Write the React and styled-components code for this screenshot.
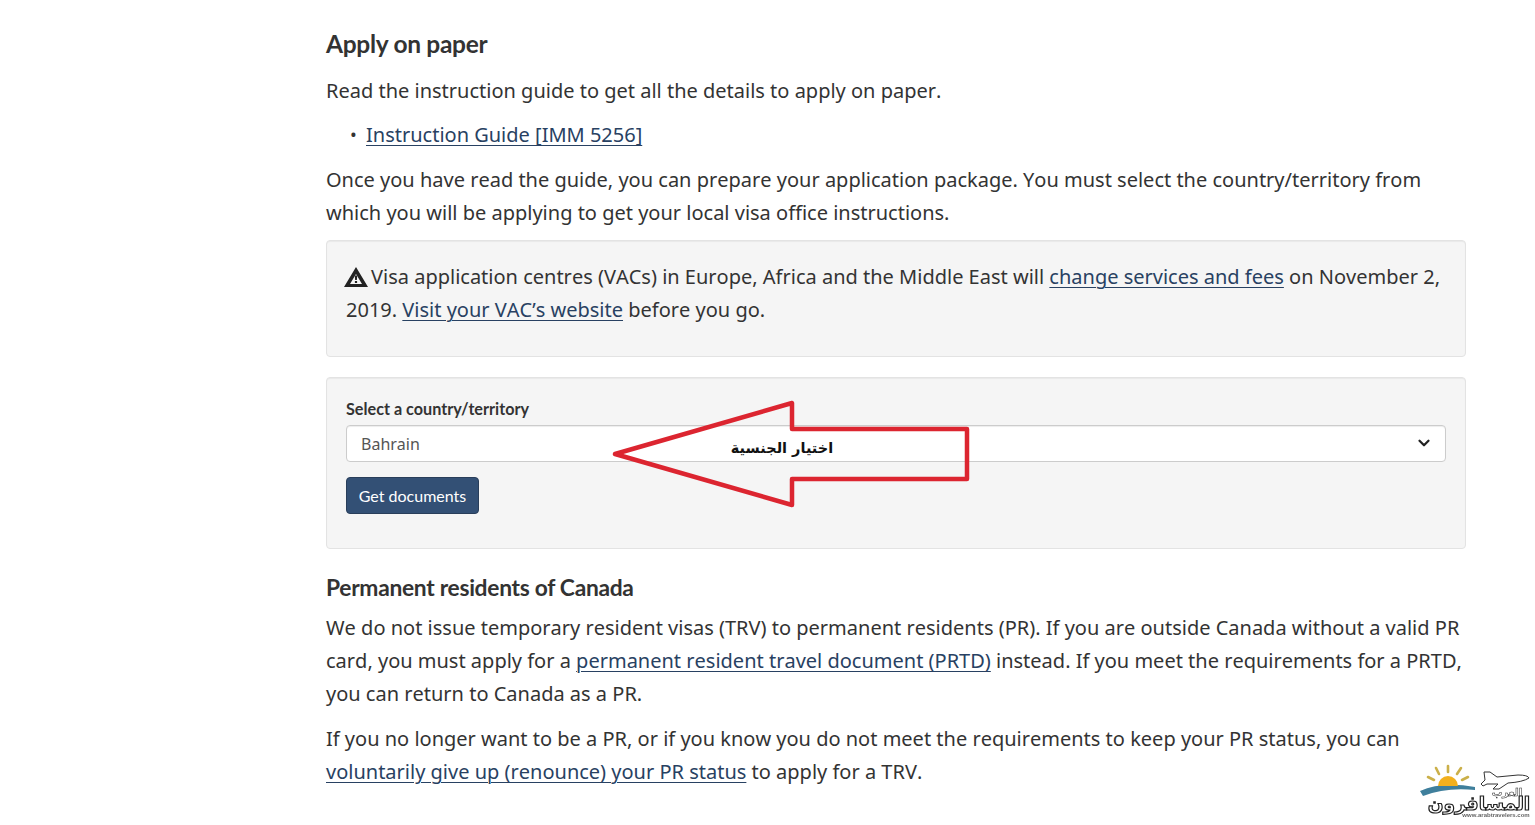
import React from 'react';
import styled, { createGlobalStyle } from 'styled-components';
import { ChevronDown } from 'lucide-react';

const GlobalStyle = createGlobalStyle`
  html, body {
    margin: 0;
    padding: 0;
    background: #fff;
  }
  body {
    font-family: "Noto Sans", sans-serif;
    font-size: 20px;
    font-kerning: none;
    line-height: 33px;
    color: #333;
    overflow: hidden;
  }
`;

const PageContainer = styled.div`
  position: relative;
  height: 825px;
  overflow: hidden;
`;

const Content = styled.main`
  width: 1140px;
  margin-left: 326px;
  padding-top: 27px;
`;

const Heading = styled.h2`
  font-family: Lato, sans-serif;
  font-kerning: normal;
  font-weight: 700;
  font-size: 24.5px;
  line-height: 34px;
  letter-spacing: -0.3px;
  margin: 0 0 13px;
`;

const SubHeading = styled(Heading).attrs({ as: 'h3' })`
  font-size: 22.8px;
  line-height: 32px;
  margin: 0 0 8px;
`;

const Paragraph = styled.p`
  margin: 0 0 ${props => props.$gap || 11}px;
`;

const List = styled.ul`
  margin: 0 0 12px;
  padding: 0 0 0 40px;
  list-style: none;
`;

const ListItem = styled.li`
  position: relative;

  &::before {
    content: '•';
    position: absolute;
    left: -16px;
    font-size: 18px;
  }
`;

const TextLink = styled.a`
  color: #284162;
  text-decoration: underline;
  text-decoration-thickness: 1px;
  text-underline-offset: 3px;
`;

const Panel = styled.section`
  position: relative;
  box-sizing: border-box;
  height: ${props => props.$height}px;
  margin-bottom: ${props => props.$gap}px;
  padding: ${props => props.$top}px 19px 0;
  background: #f5f5f5;
  border: 1px solid #e3e3e3;
  border-radius: 4px;
  box-shadow: inset 0 1px 1px rgba(0, 0, 0, 0.05);
`;

const WarningIcon = styled.svg`
  width: 24px;
  height: 20px;
  margin: 0 3px 0 -2px;
  vertical-align: -3px;
`;

const FieldLabel = styled.label`
  display: block;
  font-family: Lato, sans-serif;
  font-kerning: normal;
  font-weight: 700;
  font-size: 16.2px;
  line-height: 22px;
  margin-bottom: 5px;
`;

const SelectBox = styled.div`
  box-sizing: border-box;
  display: flex;
  align-items: center;
  justify-content: space-between;
  height: 37px;
  padding: 1px 12px 0 14px;
  background: #fff;
  border: 1px solid #ccc;
  border-radius: 4px;
  color: #555;
  font-size: 16px;
  box-shadow: inset 0 1px 1px rgba(0, 0, 0, 0.075);
`;

const SelectChevron = styled(ChevronDown)`
  margin-top: -3px;
`;

const SubmitButton = styled.button`
  display: block;
  box-sizing: border-box;
  width: 133px;
  height: 37px;
  margin-top: 15px;
  padding: 0;
  background: #335075;
  border: 1px solid #293e5a;
  border-radius: 4px;
  color: #fff;
  font-family: Lato, sans-serif;
  font-kerning: normal;
  font-size: 16px;
`;

const ArrowMark = styled.svg`
  position: absolute;
  left: 284px;
  top: 21px;
  width: 362px;
  height: 112px;
`;

const ArrowLabel = styled.span`
  position: absolute;
  left: 402px;
  top: 56px;
  width: 106px;
  text-align: center;
  direction: rtl;
  font-family: "DejaVu Sans", sans-serif;
  font-kerning: normal;
  font-weight: 700;
  font-size: 14.5px;
  line-height: 28px;
  color: #111;
`;

const Watermark = styled.svg`
  position: absolute;
  right: 3px;
  bottom: 3px;
  width: 112px;
  height: 58px;
  filter: blur(0.35px);
`;

const App = () => {
  return (
    <PageContainer>
      <GlobalStyle />
      <Content>
        <Heading>Apply on paper</Heading>
        <Paragraph>Read the instruction guide to get all the details to apply on paper.</Paragraph>
        <List>
          <ListItem><TextLink href="#">Instruction Guide [IMM 5256]</TextLink></ListItem>
        </List>
        <Paragraph $gap={11}>
          Once you have read the guide, you can prepare your application package. You must select the country/territory from which you will be applying to get your local visa office instructions.
        </Paragraph>

        <Panel $height={117} $gap={20} $top={19}>
          <WarningIcon viewBox="0 0 24 20">
            <path fillRule="evenodd" fill="#222" d="M12 0 L24 20 H0 Z M12 7 L6 17 H18 Z" />
            <path fill="#222" d="M10.8 8.5 H13.2 L12.9 13 H11.1 Z M10.9 14 H13.1 V16 H10.9 Z" />
          </WarningIcon>
          Visa application centres (VACs) in Europe, Africa and the Middle East will <TextLink href="#">change services and fees</TextLink> on November 2, 2019. <TextLink href="#">Visit your VAC’s website</TextLink> before you go.
        </Panel>

        <Panel $height={172} $gap={22} $top={20}>
          <FieldLabel>Select a country/territory</FieldLabel>
          <SelectBox>
            Bahrain
            <SelectChevron size={18} strokeWidth={3} color="#222" />
          </SelectBox>
          <SubmitButton>Get documents</SubmitButton>
          <ArrowMark viewBox="0 0 362 112">
            <path
              d="M4 55 L181 4 V30 H356 V80 H181 V106 Z"
              fill="none"
              stroke="#dc2530"
              strokeWidth="4.5"
              strokeLinejoin="round"
            />
          </ArrowMark>
          <ArrowLabel>اختيار الجنسية</ArrowLabel>
        </Panel>

        <SubHeading>Permanent residents of Canada</SubHeading>
        <Paragraph $gap={12}>
          We do not issue temporary resident visas (TRV) to permanent residents (PR). If you are outside Canada without a valid PR card, you must apply for a <TextLink href="#">permanent resident travel document (PRTD)</TextLink> instead. If you meet the requirements for a PRTD, you can return to Canada as a PR.
        </Paragraph>
        <Paragraph>
          If you no longer want to be a PR, or if you know you do not meet the requirements to keep your PR status, you can <TextLink href="#">voluntarily give up (renounce) your PR status</TextLink> to apply for a TRV.
        </Paragraph>
      </Content>

      <Watermark viewBox="0 0 112 58">
        <path d="M0 27 Q22 17 55 23 L55 26 Q26 23 3 32 Z" fill="#3f7f9c" />
        <path d="M18 22 A10 10 0 0 1 38 22 Z" fill="#f2b01e" />
        <g stroke="#cbb04a" strokeWidth="2.6" strokeLinecap="round">
          <path d="M28 8 L28 2" />
          <path d="M19 10 L16 4" />
          <path d="M37 10 L41 4" />
          <path d="M14 16 L8 13" />
          <path d="M42 16 L48 13" />
        </g>
        <path d="M64 8 L70 8 L77 13 L98 11 Q108 11 109 14 Q103 18 88 19 L79 25 L73 25 L78 20 L67 20 L63 22 L61 20 L65 16 Z" fill="#fff" stroke="#333" strokeWidth="1" />
        <text x="87" y="32" textAnchor="middle" direction="rtl" fontFamily="DejaVu Sans, sans-serif" fontWeight="700" fontSize="10.5" fill="#fff" stroke="#222" strokeWidth="0.5">العرب</text>
        <text x="59" y="46" textAnchor="middle" direction="rtl" fontFamily="DejaVu Sans, sans-serif" fontWeight="700" fontSize="18.5" fill="#fff" stroke="#222" strokeWidth="1.2">المسافرون</text>
        <text x="76" y="53" textAnchor="middle" fontFamily="Liberation Sans, sans-serif" fontWeight="700" fontSize="6" fill="#666">www.arabtravelers.com</text>
      </Watermark>
    </PageContainer>
  );
};

export default App;
